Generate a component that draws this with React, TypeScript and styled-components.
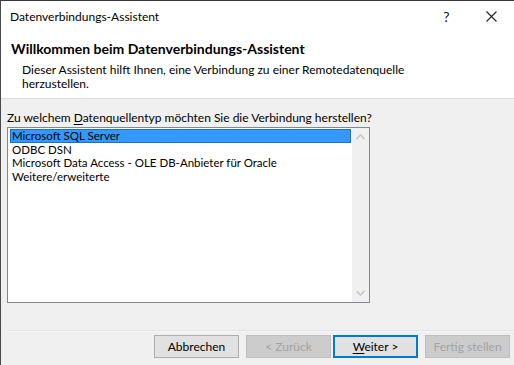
import React from "react";
import styled, { createGlobalStyle } from "styled-components";

const Global = createGlobalStyle`
  html, body { margin: 0; padding: 0; background: #f0f0f0; }
  body { font-family: Lato, "Noto Sans", sans-serif; font-size: 12px; color: #000; }
  * { box-sizing: border-box; }
`;

const Window = styled.div`
  width: 514px;
  height: 365px;
  display: flex;
  flex-direction: column;
  border-top: 1px solid #3a3a3a;
  border-left: 1px solid #4a4a4a;
  background: #f0f0f0;
  overflow: hidden;
`;

const Header = styled.div`
  background: #fff;
  height: 98px;
  border-bottom: 1px solid #dcdcdc;
  display: flex;
  flex-direction: column;
`;

const TitleBar = styled.div`
  height: 31px;
  display: flex;
  align-items: center;
  padding-left: 9px;
`;

const TitleText = styled.div`
  flex: 1;
  font-size: 12px;
  line-height: 16px;
`;

const TitleButton = styled.div`
  width: 45px;
  height: 30px;
  display: flex;
  align-items: center;
  justify-content: center;
  font-size: 14px;
  color: #111;
`;

const HeaderTitle = styled.div`
  font-weight: 700;
  font-size: 14px;
  line-height: 18px;
  margin: 8px 0 0 10px;
`;

const HeaderDesc = styled.div`
  font-size: 12px;
  line-height: 14px;
  margin: 5px 0 0 21px;
  width: 395px;
`;

const Body = styled.div`
  flex: 1;
  padding: 12px 0 0 6px;
  display: flex;
  flex-direction: column;
`;

const Question = styled.div`
  font-size: 12px;
  line-height: 14px;
  margin-bottom: 2px;
`;

const U = styled.span`
  text-decoration: underline;
  text-underline-offset: 2px;
`;

const ListBox = styled.div`
  width: 363px;
  height: 176px;
  border: 1px solid #828790;
  background: #fff;
  display: flex;
`;

const ListItems = styled.div`
  flex: 1;
  padding: 1px 1px 0 2px;
`;

const Item = styled.div<{ $selected?: boolean }>`
  height: 13.5px;
  line-height: 13.5px;
  padding-left: 2px;
  font-size: 11.5px;
  white-space: nowrap;
  background: ${(p) => (p.$selected ? "#3399ff" : "transparent")};
  outline: ${(p) => (p.$selected ? "1px solid #1c6fc4" : "none")};
  outline-offset: -1px;
`;

const ScrollBar = styled.div`
  width: 17px;
  background: #f0f0f0;
  display: flex;
  flex-direction: column;
  justify-content: space-between;
  align-items: center;
  padding: 6px 0 6px;
`;

const Separator = styled.div`
  height: 2px;
  margin-left: 6px;
  background: #e3e3e3;
  border-bottom: 1px solid #f7f7f7;
`;

const ButtonRow = styled.div`
  display: flex;
  justify-content: flex-end;
  padding: 3px 4px 7px 0;
`;

const Button = styled.div<{ $disabled?: boolean; $default?: boolean; $gap?: number }>`
  width: 85px;
  height: 23px;
  margin-left: ${(p) => p.$gap ?? 7}px;
  display: flex;
  align-items: center;
  justify-content: center;
  font-size: 12px;
  background: ${(p) => (p.$disabled ? "#cccccc" : "#e1e1e1")};
  color: ${(p) => (p.$disabled ? "#a2a2a2" : "#000")};
  border: ${(p) =>
    p.$default ? "2px solid #0078d7" : p.$disabled ? "1px solid #bfbfbf" : "1px solid #adadad"};
`;

const Chevron = ({ up }: { up?: boolean }) => (
  <svg width="9" height="6" viewBox="0 0 9 6">
    <path
      d={up ? "M0.5 5 L4.5 1 L8.5 5" : "M0.5 1 L4.5 5 L8.5 1"}
      fill="none"
      stroke="#c2c2c2"
      strokeWidth="1.3"
    />
  </svg>
);

const CloseIcon = () => (
  <svg width="11" height="11" viewBox="0 0 11 11">
    <path d="M0.5 0.5 L10.5 10.5 M10.5 0.5 L0.5 10.5" stroke="#222" strokeWidth="1.1" />
  </svg>
);

export default function App() {
  return (
    <>
      <Global />
      <Window>
        <Header>
          <TitleBar>
            <TitleText>Datenverbindungs-Assistent</TitleText>
            <TitleButton>?</TitleButton>
            <TitleButton>
              <CloseIcon />
            </TitleButton>
          </TitleBar>
          <HeaderTitle>Willkommen beim Datenverbindungs-Assistent</HeaderTitle>
          <HeaderDesc>
            Dieser Assistent hilft Ihnen, eine Verbindung zu einer Remotedatenquelle herzustellen.
          </HeaderDesc>
        </Header>
        <Body>
          <Question>
            Zu welchem <U>D</U>atenquellentyp möchten Sie die Verbindung herstellen?
          </Question>
          <ListBox>
            <ListItems>
              <Item $selected>Microsoft SQL Server</Item>
              <Item>ODBC DSN</Item>
              <Item>Microsoft Data Access - OLE DB-Anbieter für Oracle</Item>
              <Item>Weitere/erweiterte</Item>
            </ListItems>
            <ScrollBar>
              <Chevron up />
              <Chevron />
            </ScrollBar>
          </ListBox>
        </Body>
        <Separator />
        <ButtonRow>
          <Button>Abbrechen</Button>
          <Button $disabled>&lt; Zurück</Button>
          <Button $default $gap={2}>
            <span>
              <U>W</U>eiter &gt;
            </span>
          </Button>
          <Button $disabled>Fertig stellen</Button>
        </ButtonRow>
      </Window>
    </>
  );
}
